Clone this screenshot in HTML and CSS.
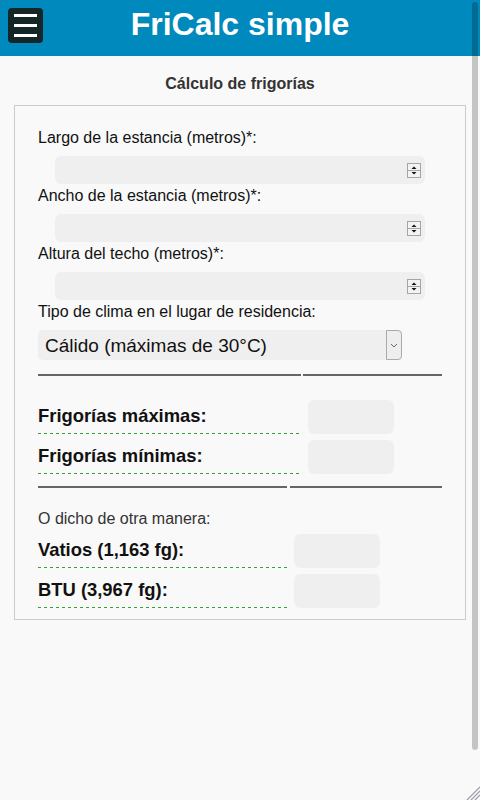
FILE: index.html
```html
<!DOCTYPE html>
<html lang="es">
<head>
  <meta charset="UTF-8">
  <title>FriCalc simple</title>
  <link rel="stylesheet" href="styles.css">
</head>
<body>
  <header class="cabecera">
    <button class="menu" aria-label="Menú"><span></span><span></span><span></span></button>
    <h1>FriCalc simple</h1>
  </header>

  <main>
    <h2>Cálculo de frigorías</h2>
    <fieldset class="formulario">
      <label for="largo">Largo de la estancia (metros)*:</label>
      <div class="campo">
        <input type="number" id="largo">
        <svg class="giro" viewBox="0 0 14 15" width="14" height="15"><rect x="0.5" y="0.5" width="13" height="14" fill="#f3f3f3" stroke="#a5a5a5"/><line x1="1" y1="7.5" x2="13" y2="7.5" stroke="#a5a5a5"/><path d="M7 3.5l2.5 2.5h-5z" fill="#111"/><path d="M7 11.5l2.5-2.5h-5z" fill="#111"/></svg>
      </div>

      <label for="ancho">Ancho de la estancia (metros)*:</label>
      <div class="campo">
        <input type="number" id="ancho">
        <svg class="giro" viewBox="0 0 14 15" width="14" height="15"><rect x="0.5" y="0.5" width="13" height="14" fill="#f3f3f3" stroke="#a5a5a5"/><line x1="1" y1="7.5" x2="13" y2="7.5" stroke="#a5a5a5"/><path d="M7 3.5l2.5 2.5h-5z" fill="#111"/><path d="M7 11.5l2.5-2.5h-5z" fill="#111"/></svg>
      </div>

      <label for="altura">Altura del techo (metros)*:</label>
      <div class="campo">
        <input type="number" id="altura">
        <svg class="giro" viewBox="0 0 14 15" width="14" height="15"><rect x="0.5" y="0.5" width="13" height="14" fill="#f3f3f3" stroke="#a5a5a5"/><line x1="1" y1="7.5" x2="13" y2="7.5" stroke="#a5a5a5"/><path d="M7 3.5l2.5 2.5h-5z" fill="#111"/><path d="M7 11.5l2.5-2.5h-5z" fill="#111"/></svg>
      </div>

      <label for="clima">Tipo de clima en el lugar de residencia:</label>
      <div class="selector">
        <select id="clima">
          <option>Cálido (máximas de 30°C)</option>
          <option>Muy cálido (máximas de 35°C)</option>
          <option>Templado (máximas de 25°C)</option>
        </select>
        <span class="flecha"><svg viewBox="0 0 8 5" width="8" height="5"><path d="M1 1l3 3 3-3" fill="none" stroke="#666"/></svg></span>
      </div>

      <div class="tabla tabla-1">
        <div class="linea"></div><div class="linea"></div>
        <div class="etiqueta">Frigorías máximas:</div><div><output class="valor"></output></div>
        <div class="etiqueta">Frigorías mínimas:</div><div><output class="valor"></output></div>
      </div>

      <div class="tabla tabla-2">
        <div class="linea"></div><div class="linea"></div>
        <div class="nota">O dicho de otra manera:</div>
        <div class="etiqueta">Vatios (1,163 fg):</div><div><output class="valor"></output></div>
        <div class="etiqueta">BTU (3,967 fg):</div><div><output class="valor"></output></div>
      </div>
    </fieldset>
  </main>

  <div class="barra"></div>
  <svg class="agarre" viewBox="0 0 16 16" width="16" height="16">
    <path d="M3 16L16 3M7 16L16 7M11 16L16 11" stroke="#9a9aa8" stroke-width="1.2"/>
  </svg>
</body>
</html>
```

FILE: styles.css
```css
body {
  margin: 0;
  background: #f9f9f9;
  font-family: 'Liberation Sans', Arial, sans-serif;
  color: #111;
}
.cabecera {
  display: grid;
  grid-template-columns: 1fr auto 1fr;
  align-items: start;
  height: 56px;
  padding: 8px;
  box-sizing: border-box;
  background: #0089bc;
}
.menu {
  justify-self: start;
  width: 35px;
  height: 35px;
  padding: 0;
  border: none;
  border-radius: 4px;
  background: #142626;
  display: flex;
  flex-direction: column;
  justify-content: center;
  align-items: center;
  gap: 7px;
}
.menu span {
  display: block;
  width: 23px;
  height: 3px;
  background: #fff;
}
h1 {
  margin: -2px 0 0;
  font-size: 32px;
  line-height: 37px;
  color: #fff;
  white-space: nowrap;
}
h2 {
  margin: 19px 0 12px;
  font-size: 16px;
  line-height: 18px;
  text-align: center;
  color: #333;
}
.formulario {
  margin: 0 14px;
  padding: 23px 23px 11px;
  border: 1px solid #ccc;
  min-inline-size: 0;
}
.formulario label {
  display: block;
  font-size: 16px;
  line-height: 18px;
}
.campo {
  display: flex;
  align-items: center;
  height: 28px;
  margin: 9px 17px 3px;
  background: #efefef;
  border-radius: 6px;
}
.campo input {
  flex: 1;
  min-width: 0;
  height: 100%;
  border: none;
  background: transparent;
  font: 16px 'Liberation Sans', Arial, sans-serif;
  padding: 0 8px;
  -moz-appearance: textfield;
}
.campo input::-webkit-inner-spin-button,
.campo input::-webkit-outer-spin-button {
  -webkit-appearance: none;
  margin: 0;
}
.giro {
  margin-right: 4px;
}
.selector {
  display: flex;
  width: 364px;
  height: 30px;
  margin-top: 9px;
  background: #efefef;
  border-radius: 5px;
}
.selector select {
  flex: 1;
  appearance: none;
  -webkit-appearance: none;
  border: none;
  background: transparent;
  padding: 0 7px;
  font: 19px 'Liberation Sans', Arial, sans-serif;
  color: #111;
}
.flecha {
  display: flex;
  align-items: center;
  justify-content: center;
  width: 16px;
  box-sizing: border-box;
  border: 1px solid #aaa;
  border-radius: 0 4px 4px 0;
  background: #eee;
}
.tabla {
  display: grid;
  row-gap: 6px;
}
.tabla-1 {
  grid-template-columns: 263px 139px;
  column-gap: 2px;
  margin-top: 14px;
}
.tabla-2 {
  grid-template-columns: 249px 152px;
  column-gap: 3px;
  margin-top: 12px;
}
.linea {
  border-top: 2px solid #666;
}
.tabla-1 .linea {
  margin-bottom: 18px;
}
.nota {
  grid-column: 1 / 3;
  margin-top: 16px;
  font-size: 16px;
  line-height: 18px;
  color: #333;
}
.etiqueta {
  display: flex;
  align-items: center;
  height: 34px;
  padding-bottom: 3px;
  box-sizing: border-box;
  background: repeating-linear-gradient(to right, #35a035 0 3px, transparent 3px 6px) left bottom / 100% 1px no-repeat;
  font-size: 18.4px;
  font-weight: bold;
}
.valor {
  display: block;
  width: 86px;
  height: 34px;
  margin-left: 5px;
  background: #efefef;
  border-radius: 6px;
}
.tabla-2 .valor {
  margin-left: 4px;
}
.barra {
  position: fixed;
  top: 2px;
  right: 2px;
  width: 6px;
  height: 748px;
  border-radius: 3px;
  background: rgba(0, 0, 0, 0.21);
}
.agarre {
  position: fixed;
  right: 0;
  bottom: 0;
}
```
